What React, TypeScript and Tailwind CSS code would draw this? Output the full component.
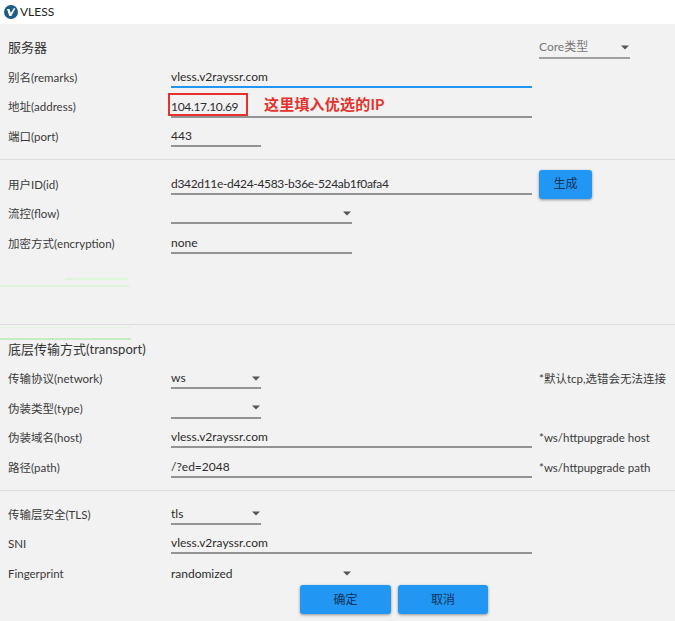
const font = { fontFamily: 'Lato, "Noto Sans CJK SC", sans-serif' };

function Arrow({ className = "" }: { className?: string }) {
  return (
    <svg width="8" height="5" viewBox="0 0 8 5" className={className}>
      <path d="M0 0.5h8L4 4.5z" fill="#555" />
    </svg>
  );
}

function Row({ label, children, hint }: { label: string; children?: React.ReactNode; hint?: string }) {
  return (
    <div className="flex h-[29.5px] items-center">
      <div className="w-[171px] shrink-0 pl-2 text-[11.5px] text-[#3a3a3a]">{label}</div>
      <div className="w-[361px] shrink-0">{children}</div>
      {hint && <div className="ml-[7px] whitespace-nowrap text-[11.5px] text-[#3a3a3a]">{hint}</div>}
    </div>
  );
}

function Field({
  value,
  width = "w-[361px]",
  focused = false,
  tight = false,
}: {
  value?: string;
  width?: string;
  focused?: boolean;
  tight?: boolean;
}) {
  return (
    <div
      className={`flex h-[21px] items-center border-b-2 pt-[1px] text-[#2c2c2c] ${width} ${focused ? "border-[#2196f3]" : "border-[#939393]"} ${tight ? "tracking-[-0.33px]" : ""}`}
    >
      {value}
    </div>
  );
}

function Select({ value, width, line = true }: { value?: string; width: string; line?: boolean }) {
  return (
    <div
      className={`flex h-[21px] items-center justify-between pt-[1px] pr-[1px] text-[#2c2c2c] ${width} ${line ? "border-b-2 border-[#939393]" : ""}`}
    >
      <span>{value}</span>
      <Arrow />
    </div>
  );
}

function Button({ label, width }: { label: string; width: string }) {
  return (
    <button className={`h-[29px] rounded-[3px] bg-[#2196f3] text-[12px] text-[#0e3358] shadow-[0_1px_3px_rgba(0,0,0,0.4)] ${width}`}>
      {label}
    </button>
  );
}

export default function App() {
  return (
    <div className="relative h-[621px] w-[675px] overflow-hidden bg-[#f2f2f2] text-[12px]" style={font}>
      {/* title bar */}
      <div className="flex h-6 items-center gap-[2px] bg-white pl-[4px] text-[12px] text-[#222]">
        <svg width="14" height="14" viewBox="0 0 14 14">
          <circle cx="7" cy="7" r="7" fill="#1d5b85" />
          <path d="M3 4h2.5l1.3 4L10 3l1.3.5L7.4 11H5.3z" fill="#fff" />
        </svg>
        VLESS
      </div>

      {/* server */}
      <div className="border-b border-[#dcdcdc] pt-[9.25px] pb-[8px]">
        <div className="flex h-[29.5px] items-center">
          <div className="w-[531px] shrink-0 pl-2 text-[13px] text-[#333]">服务器</div>
          <div className="ml-2 flex h-[21px] w-[91px] items-center justify-between border-b-2 border-[#a0a0a0] pr-[1px] text-[#777]">
            <span>Core类型</span>
            <Arrow />
          </div>
        </div>
        <Row label="别名(remarks)">
          <Field value="vless.v2rayssr.com" focused />
        </Row>
        <Row label="地址(address)">
          <Field value="104.17.10.69" tight />
        </Row>
        <Row label="端口(port)">
          <Field value="443" width="w-[90px]" />
        </Row>
      </div>

      {/* user */}
      <div className="h-[165px] border-b border-[#dcdcdc] pt-[9.25px]">
        <div className="flex h-[29.5px] items-center">
          <div className="w-[171px] shrink-0 pl-2 text-[11.5px] text-[#3a3a3a]">用户ID(id)</div>
          <Field value="d342d11e-d424-4583-b36e-524ab1f0afa4" tight />
          <div className="ml-[7px]">
            <Button label="生成" width="w-[53px]" />
          </div>
        </div>
        <Row label="流控(flow)">
          <Select width="w-[181px]" />
        </Row>
        <Row label="加密方式(encryption)">
          <Field value="none" width="w-[181px]" />
        </Row>
      </div>

      {/* transport */}
      <div className="h-[166px] border-b border-[#dcdcdc] pt-[9.25px]">
        <div className="flex h-[29.5px] items-center pl-2 text-[13px] text-[#333]">底层传输方式(transport)</div>
        <Row label="传输协议(network)" hint="*默认tcp,选错会无法连接">
          <Select value="ws" width="w-[90px]" />
        </Row>
        <Row label="伪装类型(type)">
          <Select width="w-[90px]" />
        </Row>
        <Row label="伪装域名(host)" hint="*ws/httpupgrade host">
          <Field value="vless.v2rayssr.com" />
        </Row>
        <Row label="路径(path)" hint="*ws/httpupgrade path">
          <Field value="/?ed=2048" />
        </Row>
      </div>

      {/* tls */}
      <div className="pt-[8.25px]">
        <Row label="传输层安全(TLS)">
          <Select value="tls" width="w-[90px]" />
        </Row>
        <Row label="SNI">
          <Field value="vless.v2rayssr.com" />
        </Row>
        <Row label="Fingerprint">
          <Select value="randomized" width="w-[181px]" line={false} />
        </Row>
      </div>

      <div className="mt-[-3px] flex gap-[7px] pl-[300px]">
        <Button label="确定" width="w-[91px]" />
        <Button label="取消" width="w-[90px]" />
      </div>

      {/* red annotation over the address field */}
      <div className="absolute top-[93px] left-[168px] h-[23px] w-[80px] border-2 border-[#e5322d]" />
      <div className="absolute top-[93px] left-[264px] text-[15px] font-bold tracking-[0.2px] text-[#e5322d]">这里填入优选的IP</div>

      {/* green capture artefacts */}
      <div className="absolute top-[278px] left-[65px] h-[2px] w-[63px] bg-[#dcf5d8]" />
      <div className="absolute top-[285px] left-0 h-[2px] w-[130px] bg-[#dff5db]" />
      <div className="absolute top-[327px] left-0 h-px w-[132px] bg-[#e2f3df]" />
      <div className="absolute top-[338px] left-0 h-[2px] w-[131px] bg-[#c4eec0]" />
    </div>
  );
}
